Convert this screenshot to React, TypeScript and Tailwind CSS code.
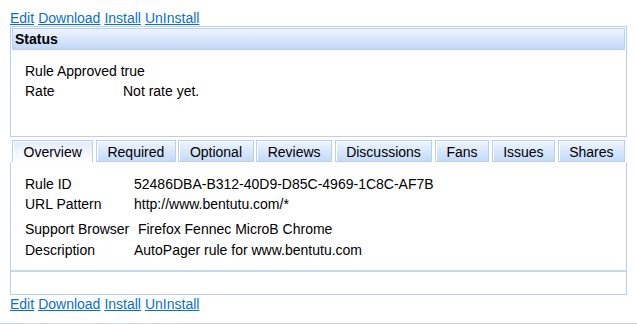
const links = ["Edit", "Download", "Install", "UnInstall"]
const tabs = ["Overview", "Required", "Optional", "Reviews", "Discussions", "Fans", "Issues", "Shares"]

const LinkBar = ({ className }: { className: string }) => (
    <div className={`flex gap-[4px] pl-[10px] leading-[16px] ${className}`}>
        {links.map((l) => (
            <a key={l} href="#" className="text-[#0a6fd0] underline">{l}</a>
        ))}
    </div>
)

const App = () => {
    return (
        <div className="w-[637px] h-[324px] overflow-hidden bg-white text-[14px] text-black" style={{ fontFamily: '"Liberation Sans", Arial, sans-serif' }}>
            <LinkBar className="h-[26px] pt-[10px]" />

            <div className="ml-[10px] w-[617px] h-[111px] border border-[#b9d1f0] p-[1px]">
                <div className="h-[22px] border border-[#b9d1f0] bg-gradient-to-b from-[#eff4fd] to-[#c2d8f6] pl-[2px] leading-[20px] font-bold">Status</div>
                <div className="pl-[13px] pt-[11px] leading-[20px]">
                    <div>Rule Approved true</div>
                    <div className="flex">
                        <span className="w-[98px]">Rate</span>
                        <span>Not rate yet.</span>
                    </div>
                </div>
            </div>

            <div className="mt-[3px] ml-[12px] flex gap-[2.6px]">
                {tabs.map((t, i) => (
                    <div
                        key={t}
                        className={
                            i === 0
                                ? "h-[22px] border border-b-0 border-[#b9d1f0] bg-gradient-to-b from-[#e2ebfb] to-white px-[10.5px] pt-[1px] leading-[20px] shadow-[inset_1px_1px_0_#fff]"
                                : "h-[22px] border border-[#b9d1f0] bg-gradient-to-b from-[#eef4fd] to-[#c4daf7] px-[10.5px] pt-[1px] leading-[20px] shadow-[inset_1px_1px_0_#fff]"
                        }
                    >
                        {t}
                    </div>
                ))}
            </div>

            <div className="ml-[10px] w-[617px] h-[133px] border border-t-0 border-[#b9d1f0]">
                <div className="h-[110px] border-b-2 border-[#c4d8f2] pl-[14px] pt-[12px] leading-[20px]">
                    <div className="flex">
                        <span className="w-[109px]">Rule ID</span>
                        <span>52486DBA-B312-40D9-D85C-4969-1C8C-AF7B</span>
                    </div>
                    <div className="flex">
                        <span className="w-[109px]">URL Pattern</span>
                        <span>http://www.bentutu.com/*</span>
                    </div>
                    <div className="flex h-[25px] pt-[5px]">
                        <span className="w-[109px]">Support Browser</span>
                        <span>&nbsp;Firefox Fennec MicroB Chrome</span>
                    </div>
                    <div className="flex pt-[1px]">
                        <span className="w-[109px]">Description</span>
                        <span>AutoPager rule for www.bentutu.com</span>
                    </div>
                </div>
            </div>

            <LinkBar className="h-[17px] pt-[1px]" />
            <div className="mt-[11px] border-t border-[#c8d8ee]" />
        </div>
    )
}

export default App
